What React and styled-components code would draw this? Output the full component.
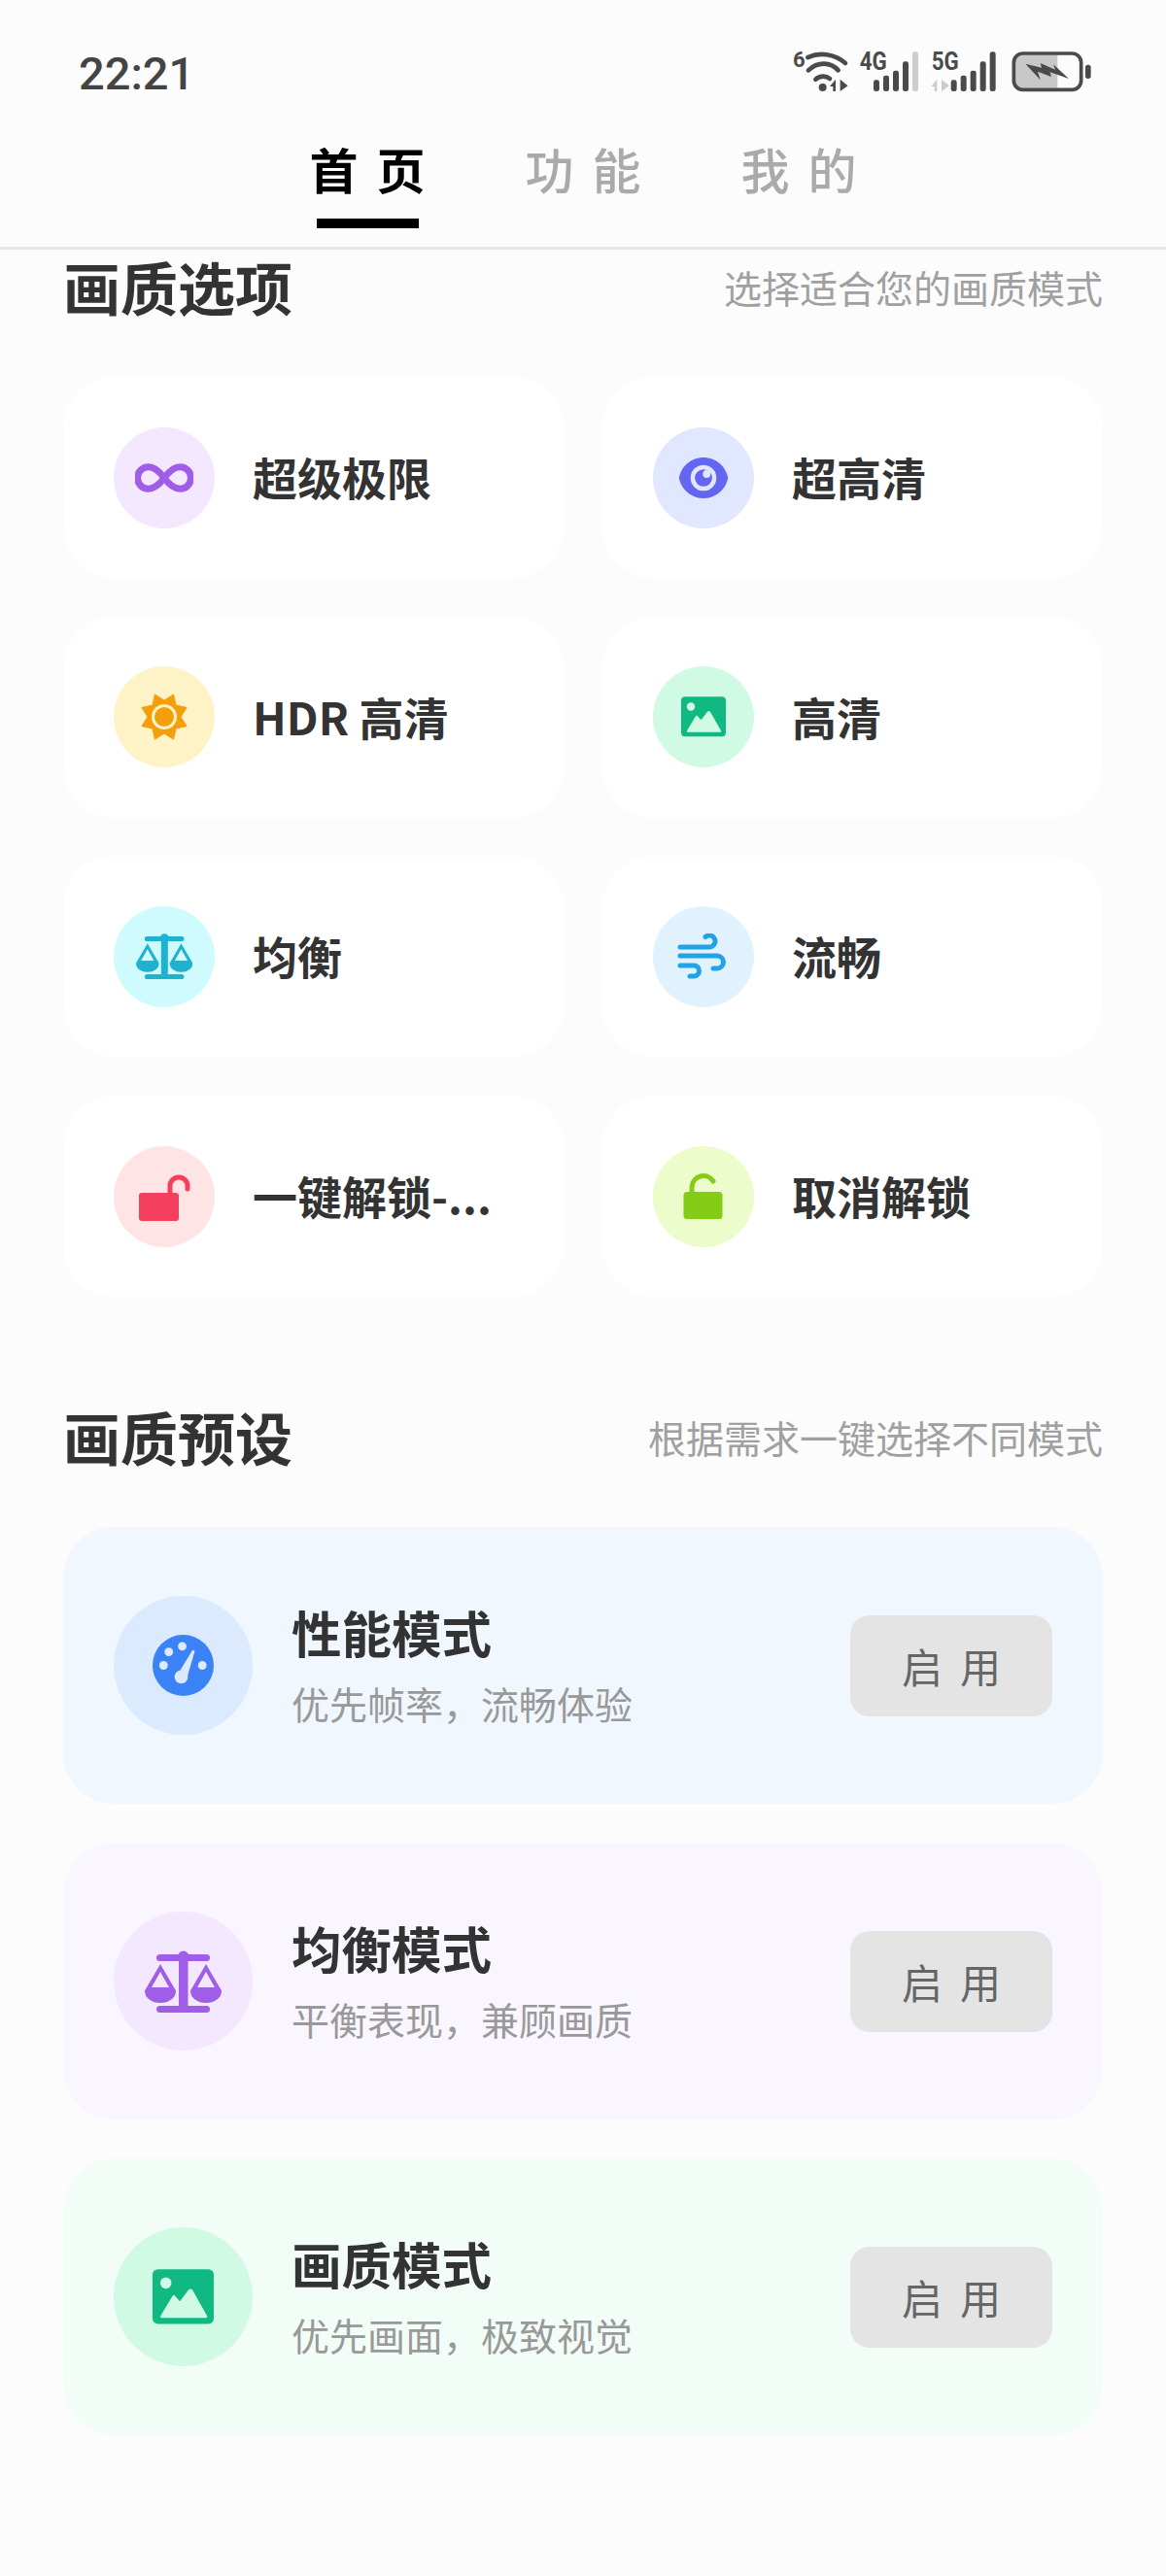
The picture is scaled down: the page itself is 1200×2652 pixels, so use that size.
import React from 'react';
import styled, { createGlobalStyle } from 'styled-components';

const GlobalStyle = createGlobalStyle`
  html, body {
    margin: 0;
    padding: 0;
    background: #fcfcfc;
  }
  * {
    box-sizing: border-box;
  }
`;

const FONT = `"Noto Sans CJK SC", "Noto Sans", sans-serif`;

const Page = styled.div`
  width: 1200px;
  min-height: 2652px;
  background: #fcfcfc;
  font-family: ${FONT};
  color: #333;
`;

const Header = styled.header`
  height: 257px;
  border-bottom: 3px solid #e6e6e6;
`;

const StatusBar = styled.div`
  height: 100px;
  padding: 50px 76px 0 81px;
  display: flex;
  justify-content: space-between;
  align-items: flex-start;
`;

const Clock = styled.span`
  font-family: Roboto, sans-serif;
  font-weight: 500;
  font-size: 47px;
  line-height: 52px;
  color: #444;
`;

const StatusIcons = styled.div`
  display: flex;
  align-items: flex-end;
  gap: 10px;
  margin-top: -8px;
  color: #4a4a4a;
`;

const Tabs = styled.nav`
  display: flex;
  justify-content: center;
  gap: 65px;
  padding-top: 37px;
`;

const Tab = styled.div`
  position: relative;
  height: 85px;
  font-size: 50px;
  line-height: 72px;
  letter-spacing: 19px;
  text-indent: 19px;
  font-weight: ${({ $active }) => ($active ? 700 : 500)};
  color: ${({ $active }) => ($active ? '#000' : '#aaa')};

  ${({ $active }) => $active && `
    &::after {
      content: '';
      position: absolute;
      left: 26px;
      right: 26px;
      bottom: -13px;
      height: 10px;
      background: #000;
    }
  `}
`;

const Main = styled.main`
  padding: 0 65px;
`;

const SectionHead = styled.div`
  height: 76px;
  margin-bottom: 55px;
  display: flex;
  justify-content: space-between;
  align-items: center;
`;

const SectionTitle = styled.h2`
  margin: 0;
  font-size: 59px;
  line-height: 76px;
  font-weight: 700;
  color: #333;
`;

const SectionHint = styled.span`
  font-size: 39px;
  color: #a0a0a0;
`;

const OptionGrid = styled.div`
  display: grid;
  grid-template-columns: 1fr 1fr;
  gap: 39.7px 40px;
  margin-bottom: 106px;
`;

const OptionCard = styled.div`
  height: 207px;
  padding: 0 52px;
  display: flex;
  align-items: center;
  gap: 39px;
  background: #fff;
  border-radius: 52px;
`;

const IconCircle = styled.div`
  flex: none;
  width: ${({ $size }) => $size}px;
  height: ${({ $size }) => $size}px;
  border-radius: 50%;
  display: flex;
  align-items: center;
  justify-content: center;
  background: ${({ $bg }) => $bg};
  color: ${({ $fg }) => $fg};
`;

const OptionName = styled.span`
  padding-bottom: 3px;
  font-size: 46px;
  font-weight: 700;
  white-space: nowrap;
  color: #333;
`;

const PresetList = styled.div`
  display: flex;
  flex-direction: column;
  gap: 40px;
`;

const PresetCard = styled.div`
  height: 285px;
  padding: 0 52px;
  display: flex;
  align-items: center;
  gap: 40px;
  border-radius: 52px;
  background: ${({ $bg }) => $bg};
`;

const PresetText = styled.div`
  flex: 1;
  padding-bottom: 5px;
`;

const PresetName = styled.div`
  margin-bottom: 8px;
  font-size: 51.5px;
  line-height: 74px;
  font-weight: 700;
  color: #333;
`;

const PresetDesc = styled.div`
  font-size: 39px;
  line-height: 56px;
  color: #999;
`;

const EnableButton = styled.button`
  flex: none;
  width: 208px;
  height: 104px;
  border: 0;
  padding: 0 0 0 18px;
  border-radius: 20px;
  background: #e4e4e4;
  font-family: ${FONT};
  font-size: 42px;
  letter-spacing: 18px;
  color: #666;
`;

// status bar coordinates are 3x the on-screen pixels, taken from the zoomed reference
const WifiIcon = () => (
  <svg width="59.3" height="54" viewBox="105 41 178 162" fill="none">
    <text x="108" y="122" fontFamily="Roboto, sans-serif" fontWeight="700" fontSize="66" fill="currentColor">6</text>
    <path d="M154 92C190 76 235 80 270 110" stroke="currentColor" strokeWidth="14" strokeLinecap="round" />
    <path d="M156 132C185 104 225 106 248 132" stroke="currentColor" strokeWidth="14" strokeLinecap="round" />
    <path d="M178 160C192 148 210 148 222 158" stroke="currentColor" strokeWidth="14" strokeLinecap="round" />
    <circle cx="200" cy="185" r="12" fill="currentColor" />
    <path d="M240 197V160L222 182H232V197ZM254 160V197L278 180Z" fill="currentColor" />
  </svg>
);

const SignalIcon = ({ label, viewX, width, bars, textX, lastLight, arrows }) => (
  <svg width={width / 3} height="54" viewBox={`${viewX} 41 ${width} 162`}>
    <text x={textX} y="130" fontFamily="Roboto, sans-serif" fontWeight="700" fontSize="78" textLength="84" lengthAdjust="spacingAndGlyphs" fill="currentColor">{label}</text>
    {arrows && <path d="M552 197V160L534 182H544V197ZM566 160V197L590 180Z" fill="#ccc" />}
    {bars.map(([x, top], i) => (
      <rect
        key={x}
        x={x}
        y={top}
        width="18"
        height={197 - top}
        rx="7"
        fill={lastLight && i === bars.length - 1 ? '#ccc' : 'currentColor'}
      />
    ))}
  </svg>
);

const BatteryIcon = () => (
  <svg width="88" height="46" viewBox="768 65 264 138">
    <rect x="795" y="85" width="130" height="102" fill="#c8c8c8" />
    <rect x="790" y="80" width="208" height="112" rx="28" fill="none" stroke="currentColor" strokeWidth="11" />
    <rect x="1011" y="115" width="17" height="43" rx="8" fill="currentColor" />
    <path d="M826 112L876 124L872 110L918 130L912 114L960 158L902 138L906 152L864 136L872 162Z" fill="currentColor" />
  </svg>
);

const InfinityIcon = () => (
  <svg width="60" height="30" viewBox="0 0 59 29" fill="none">
    <path
      d="M29.5 14.5C24 7 19 3.5 13.5 3.5a11 11 0 0 0 0 22C19 25.5 24 22 29.5 14.5C35 7 40 3.5 45.5 3.5a11 11 0 0 1 0 22C40 25.5 35 22 29.5 14.5Z"
      stroke="currentColor"
      strokeWidth="7"
    />
  </svg>
);

const EyeIcon = ({ hole }) => (
  <svg width="56" height="56" viewBox="0 0 24 24">
    <path d="M1.2 12C2.1 6.9 6.6 3 12 3s9.9 3.9 10.8 9c-.9 5.1-5.4 9-10.8 9S2.1 17.1 1.2 12Z" fill="currentColor" />
    <circle cx="12" cy="12" r="5.7" fill={hole} />
    <circle cx="12" cy="12" r="3.8" fill="currentColor" />
    <circle cx="13.4" cy="10.3" r="1.7" fill={hole} />
  </svg>
);

const SunIcon = ({ hole }) => {
  const points = Array.from({ length: 16 }, (_, i) => {
    const angle = ((i * 22.5 + 22.5) * Math.PI) / 180;
    const r = i % 2 === 0 ? 25 : 17;
    return `${28 + r * Math.sin(angle)},${28 - r * Math.cos(angle)}`;
  }).join(' ');
  return (
    <svg width="56" height="56" viewBox="0 0 56 56">
      <polygon points={points} fill="currentColor" stroke="currentColor" strokeWidth="1" strokeLinejoin="round" />
      <circle cx="28" cy="28" r="13" fill={hole} />
      <circle cx="28" cy="28" r="10" fill="currentColor" />
    </svg>
  );
};

const ImageIcon = ({ width, hole }) => (
  <svg width={width} height={width * 0.9} viewBox="0 0 46 41">
    <rect width="46" height="41" rx="4" fill="currentColor" />
    <circle cx="10" cy="10.3" r="4.2" fill={hole} />
    <path d="M6 35L15 20q1-1.5 2 0L20.5 24L27 15.5q1.5-1.5 3 0L41 35q.5 1.5-1 1.5H7q-1.5 0-1-1.5Z" fill={hole} />
  </svg>
);

const ScalesIcon = ({ width }) => (
  <svg width={width} height={width * 0.8} viewBox="0 0 80 64" fill="currentColor">
    <circle cx="39.7" cy="6" r="5.5" />
    <rect x="12" y="4" width="55" height="7" rx="3.5" />
    <rect x="35" y="6" width="9.5" height="52" />
    <rect x="12" y="57" width="55" height="7" rx="3.5" />
    <path
      fillRule="evenodd"
      d="M16 14L2 38Q0 41 0 42A16 12 0 0 0 32 42Q32 41 30 38ZM16 22L7 38H25Z"
    />
    <path
      fillRule="evenodd"
      d="M63 14L49 38Q47 41 47 42A16 12 0 0 0 79 42Q79 41 77 38ZM63 22L54 38H72Z"
    />
  </svg>
);

const WindIcon = () => (
  <svg width="55" height="48" viewBox="0 0 55 48" fill="none" stroke="currentColor" strokeWidth="5" strokeLinecap="round">
    <path d="M3 14H33A6 6 0 1 0 29 3.5" />
    <path d="M3 23H41a6.5 6.5 0 0 1 0 13H37" />
    <path d="M3 33H17a5.5 5.5 0 0 1 0 11H13" />
  </svg>
);

const SideLockIcon = () => (
  <svg width="56" height="56" viewBox="0 0 56 56">
    <rect x="2" y="24" width="41" height="29" rx="3" fill="currentColor" />
    <path d="M34 24V17a9 9 0 0 1 18 0v3" fill="none" stroke="currentColor" strokeWidth="5" strokeLinecap="round" />
  </svg>
);

const OpenLockIcon = () => (
  <svg width="46" height="50" viewBox="0 0 46 50">
    <rect x="2.5" y="20" width="40" height="28" rx="3.5" fill="currentColor" />
    <path d="M11 22V15A12 12 0 0 1 33 9" fill="none" stroke="currentColor" strokeWidth="5" strokeLinecap="round" />
  </svg>
);

const GaugeIcon = ({ hole }) => (
  <svg width="63" height="63" viewBox="0 0 64 64">
    <circle cx="32" cy="32" r="32" fill="currentColor" />
    <circle cx="11.5" cy="32" r="4.5" fill={hole} />
    <circle cx="17" cy="18" r="4.5" fill={hole} />
    <circle cx="31" cy="12" r="4.5" fill={hole} />
    <circle cx="52" cy="32" r="4.5" fill={hole} />
    <circle cx="30" cy="44" r="7" fill={hole} />
    <path d="M26 42L41.5 16.5q2-1.5 2.5 1L36 45Z" fill={hole} />
  </svg>
);

const options = [
  { name: '超级极限', bg: '#f3e8ff', fg: '#a05ee8', icon: <InfinityIcon /> },
  { name: '超高清', bg: '#e0e7ff', fg: '#6366f1', icon: <EyeIcon hole="#e0e7ff" /> },
  { name: 'HDR 高清', bg: '#fef3c7', fg: '#f59e0b', icon: <SunIcon hole="#fef3c7" /> },
  { name: '高清', bg: '#d1fae5', fg: '#10b981', icon: <ImageIcon width={46} hole="#d1fae5" /> },
  { name: '均衡', bg: '#cffafe', fg: '#1fb2d0', icon: <ScalesIcon width={59} /> },
  { name: '流畅', bg: '#e0f2fe', fg: '#22a3e6', icon: <WindIcon /> },
  { name: '一键解锁-...', bg: '#ffe4e6', fg: '#f43f5e', icon: <SideLockIcon /> },
  { name: '取消解锁', bg: '#ecfccb', fg: '#84cc16', icon: <OpenLockIcon /> },
];

const presets = [
  { name: '性能模式', desc: '优先帧率，流畅体验', card: '#f0f7ff', bg: '#dbeafe', fg: '#3b82f6', icon: <GaugeIcon hole="#dbeafe" /> },
  { name: '均衡模式', desc: '平衡表现，兼顾画质', card: '#f9f6ff', bg: '#f3e8ff', fg: '#a05ee8', icon: <ScalesIcon width={80} /> },
  { name: '画质模式', desc: '优先画面，极致视觉', card: '#f3fdf7', bg: '#d1fae5', fg: '#10b981', icon: <ImageIcon width={63} hole="#d1fae5" /> },
];

const App = () => (
  <Page>
    <GlobalStyle />
    <Header>
      <StatusBar>
        <Clock>22:21</Clock>
        <StatusIcons>
          <WifiIcon />
          <SignalIcon
            label="4G"
            viewX={313}
            width={187}
            textX={315}
            lastLight
            bars={[[358, 162], [388, 148], [418, 133], [448, 105], [478, 75]]}
          />
          <SignalIcon
            label="5G"
            viewX={530}
            width={208}
            textX={535}
            arrows
            bars={[[595, 162], [625, 148], [655, 133], [685, 105], [715, 75]]}
          />
          <BatteryIcon />
        </StatusIcons>
      </StatusBar>
      <Tabs>
        <Tab $active>首页</Tab>
        <Tab>功能</Tab>
        <Tab>我的</Tab>
      </Tabs>
    </Header>
    <Main>
      <SectionHead>
        <SectionTitle>画质选项</SectionTitle>
        <SectionHint>选择适合您的画质模式</SectionHint>
      </SectionHead>
      <OptionGrid>
        {options.map((option) => (
          <OptionCard key={option.name}>
            <IconCircle $size={104} $bg={option.bg} $fg={option.fg}>{option.icon}</IconCircle>
            <OptionName>{option.name}</OptionName>
          </OptionCard>
        ))}
      </OptionGrid>
      <SectionHead>
        <SectionTitle>画质预设</SectionTitle>
        <SectionHint>根据需求一键选择不同模式</SectionHint>
      </SectionHead>
      <PresetList>
        {presets.map((preset) => (
          <PresetCard key={preset.name} $bg={preset.card}>
            <IconCircle $size={143} $bg={preset.bg} $fg={preset.fg}>{preset.icon}</IconCircle>
            <PresetText>
              <PresetName>{preset.name}</PresetName>
              <PresetDesc>{preset.desc}</PresetDesc>
            </PresetText>
            <EnableButton>启用</EnableButton>
          </PresetCard>
        ))}
      </PresetList>
    </Main>
  </Page>
);

export default App;
